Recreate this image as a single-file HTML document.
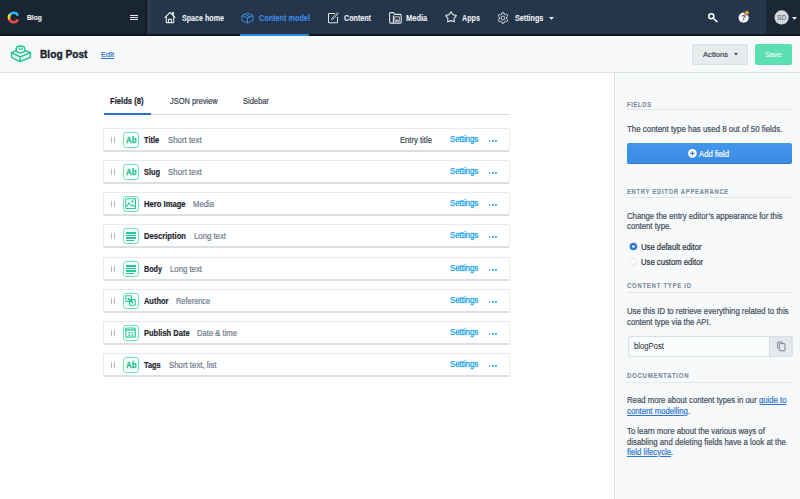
<!DOCTYPE html>
<html><head><meta charset="utf-8"><style>
*{box-sizing:border-box;margin:0;padding:0}
html,body{width:800px;height:499px;overflow:hidden;background:#fff;font-family:"Liberation Sans",sans-serif;color:#2a3039}
.a{position:absolute;white-space:nowrap}
.b{position:absolute}
svg{position:absolute;overflow:visible}
</style></head><body>
<div class="b" style="left:0px;top:0px;width:800px;height:36px;background:#25354a;"></div>
<div class="b" style="left:0px;top:0px;width:145px;height:36px;background:#192533;"></div>
<div class="b" style="left:145px;top:0px;width:2px;height:36px;background:#121b25;"></div>
<div class="b" style="left:147px;top:0px;width:4px;height:36px;background:#2a3a4c;"></div>
<div class="b" style="left:766px;top:0px;width:34px;height:36px;background:#1b2735;"></div>
<div class="b" style="left:0px;top:34px;width:800px;height:2px;background:#0f1720;"></div>
<svg style="left:0;top:0" width="30" height="30" viewBox="0 0 30 30">
<path d="M17.40 14.61 A4.7 4.7 0 0 0 9.85 14.80" stroke="#33b9f2" stroke-width="2.6" fill="none" stroke-linecap="round"/>
<path d="M9.85 14.80 A4.7 4.7 0 0 0 9.63 19.85" stroke="#fde021" stroke-width="2.6" fill="none"/>
<path d="M9.63 19.85 A4.7 4.7 0 0 0 17.40 20.39" stroke="#f2494c" stroke-width="2.6" fill="none" stroke-linecap="round"/>
</svg><div class="a" id="t0" style="left:27.10px;top:14px;font-size:7.5px;line-height:7.5px;font-weight:700;color:#f2f4f6;-webkit-text-stroke:0.1px #f2f4f6;;transform:scaleX(0.8997);transform-origin:0 0;">Blog</div>
<div class="b" style="left:129.5px;top:15px;width:8px;height:1.2px;background:#e6eaee;"></div>
<div class="b" style="left:129.5px;top:17px;width:8px;height:1.2px;background:#e6eaee;"></div>
<div class="b" style="left:129.5px;top:19px;width:8px;height:1.2px;background:#e6eaee;"></div>
<div class="a" id="t1" style="left:181.90px;top:14px;font-size:8.3px;line-height:8.3px;font-weight:700;color:#eef1f4;-webkit-text-stroke:0.1px #eef1f4;;transform:scaleX(0.8591);transform-origin:0 0;">Space home</div>
<div class="a" id="t2" style="left:259.00px;top:14px;font-size:8.3px;line-height:8.3px;font-weight:700;color:#3b8fe2;-webkit-text-stroke:0.1px #3b8fe2;;transform:scaleX(0.8764);transform-origin:0 0;">Content model</div>
<div class="a" id="t3" style="left:344.25px;top:14px;font-size:8.3px;line-height:8.3px;font-weight:700;color:#eef1f4;-webkit-text-stroke:0.1px #eef1f4;;transform:scaleX(0.8614);transform-origin:0 0;">Content</div>
<div class="a" id="t4" style="left:406.20px;top:14px;font-size:8.3px;line-height:8.3px;font-weight:700;color:#eef1f4;-webkit-text-stroke:0.1px #eef1f4;;transform:scaleX(0.9015);transform-origin:0 0;">Media</div>
<div class="a" id="t5" style="left:462.30px;top:14px;font-size:8.3px;line-height:8.3px;font-weight:700;color:#eef1f4;-webkit-text-stroke:0.1px #eef1f4;;transform:scaleX(0.8627);transform-origin:0 0;">Apps</div>
<div class="a" id="t6" style="left:514.60px;top:14px;font-size:8.3px;line-height:8.3px;font-weight:700;color:#eef1f4;-webkit-text-stroke:0.1px #eef1f4;;transform:scaleX(0.8645);transform-origin:0 0;">Settings</div>
<div class="b" style="left:240.4px;top:34px;width:68.6px;height:2px;background:#2f8ae6;"></div>
<svg style="left:164px;top:11px" width="13" height="13" viewBox="0 0 13 13">
<g stroke="#dfe4e9" stroke-width="1.15" fill="none" stroke-linejoin="round" stroke-linecap="round">
<path d="M1 6.4 L6 1.5 L11 6.4"/><path d="M2.3 5.3 V11.6 H9.7 V5.3"/><path d="M4.5 11.6 V8.4 H7.5 V11.6"/><path d="M8.4 2.6 V1.6 H9.5 V4"/></g></svg><svg style="left:241px;top:11.5px" width="13" height="12" viewBox="0 0 13 12">
<path d="M6.5 1 L12 3.5 V8.5 L6.5 11 L1 8.5 V3.5 Z M1 3.5 L6.5 6 L12 3.5 M6.5 6 V11 M3.8 2.3 L9.2 4.8" stroke="#3b8fe2" stroke-width="1" fill="none" stroke-linejoin="round"/></svg><svg style="left:327px;top:11.5px" width="12" height="12" viewBox="0 0 12 12">
<path d="M8 1.5 H1.5 V10.8 H10.5 V4.8" stroke="#dfe4e9" stroke-width="1" fill="none"/>
<path d="M4.6 7.6 L5.1 6 L10.4 0.9 L11.2 1.7 L6.1 7.0 Z" stroke="#dfe4e9" stroke-width="0.8" fill="none"/></svg><svg style="left:388.5px;top:12px" width="13" height="12" viewBox="0 0 13 12">
<g stroke="#dfe4e9" stroke-width="1.1" fill="none" stroke-linejoin="round">
<path d="M1.6 0.6 H4.6 L5.6 2.4 H11.3 Q12.2 2.4 12.2 3.3 V10.2 Q12.2 11.1 11.3 11.1 H1.5 Q0.6 11.1 0.6 10.2 V1.6 Q0.6 0.6 1.6 0.6 Z"/>
<path d="M4.4 3.4 V11"/><rect x="5.8" y="4.8" width="4.6" height="4.6" stroke-width="0.8"/></g>
<path d="M6.4 8.8 L7.6 7 L8.4 8 L9 7.4 L9.9 8.8 Z" fill="#dfe4e9"/></svg><svg style="left:444.5px;top:11.3px" width="12" height="12" viewBox="0 0 12 12">
<path d="M6.00 0.70 L7.94 3.63 L11.33 4.57 L9.14 7.32 L9.29 10.83 L6.00 9.60 L2.71 10.83 L2.86 7.32 L0.67 4.57 L4.06 3.63 Z" stroke="#dfe4e9" stroke-width="1.15" fill="none" stroke-linejoin="round"/></svg><svg style="left:497px;top:11.5px" width="12" height="12" viewBox="0 0 12 12">
<circle cx="6" cy="6" r="1.9" stroke="#dfe4e9" stroke-width="0.9" fill="none"/>
<path d="M5 0.8 H7 L7.3 2.2 L8.4 2.8 L9.8 2.2 L10.8 3.9 L9.7 4.9 V7.1 L10.8 8.1 L9.8 9.8 L8.4 9.2 L7.3 9.8 L7 11.2 H5 L4.7 9.8 L3.6 9.2 L2.2 9.8 L1.2 8.1 L2.3 7.1 V4.9 L1.2 3.9 L2.2 2.2 L3.6 2.8 L4.7 2.2 Z" stroke="#dfe4e9" stroke-width="0.9" fill="none" stroke-linejoin="round"/></svg><svg style="left:549px;top:16.8px" width="5" height="3" viewBox="0 0 5 3"><path d="M0 0 H5 L2.5 2.8 Z" fill="#eef1f4"/></svg><svg style="left:707px;top:12px" width="10" height="10" viewBox="0 0 10 10">
<circle cx="4.3" cy="4.3" r="2.5" stroke="#fff" stroke-width="1.5" fill="none"/><path d="M6.2 6.2 L10 9.6" stroke="#fff" stroke-width="1.5" stroke-linecap="round"/></svg><svg style="left:738px;top:10.5px" width="13" height="13" viewBox="0 0 13 13">
<circle cx="5.6" cy="6.7" r="5.1" fill="#f4f6f8"/>
<text x="5.6" y="9.4" font-family="Liberation Sans" font-size="7" font-weight="700" fill="#25354a" text-anchor="middle">?</text>
<circle cx="8.9" cy="1.8" r="2.3" fill="#f7a52b" stroke="#25354a" stroke-width="0.7"/></svg><svg style="left:774px;top:10px" width="16" height="15" viewBox="0 0 16 15">
<circle cx="7.6" cy="7.4" r="7.1" fill="#d5d9dd"/>
<text x="7.6" y="9.9" font-family="Liberation Sans" font-size="6.6" font-weight="400" fill="#59636e" text-anchor="middle">SD</text></svg><svg style="left:792px;top:17px" width="5" height="3" viewBox="0 0 5 3"><path d="M0 0 H5 L2.5 2.8 Z" fill="#fff"/></svg><div class="b" style="left:0px;top:36px;width:800px;height:37px;background:#f7f9fa;border-bottom:1px solid #dde4e8"></div>
<svg style="left:5px;top:40px" width="35" height="28" viewBox="0 0 35 28">
<g stroke="#22c98f" stroke-width="1.5" fill="none" stroke-linejoin="round" stroke-linecap="round">
<path d="M6.6 12.6 L11.3 10.4 M19.7 10.4 L25.4 12.5 L15.2 17 L6.6 12.6 V17.4 L15.2 21.6 L25.4 17.2 V12.5 M15.2 17 V21.6"/>
<path d="M11.3 10.3 V8.6 A4.2 2.5 0 0 1 19.7 8.6 V10.3 A4.2 2.5 0 0 1 11.3 10.3 Z"/>
<ellipse cx="15.5" cy="8.8" rx="1.6" ry="0.9" stroke-width="1"/>
</g></svg><div class="a" id="t7" style="left:40.20px;top:50px;font-size:10.0px;line-height:10.0px;font-weight:700;color:#1b2431;-webkit-text-stroke:0.35px #1b2431;;transform:scaleX(1.0177);transform-origin:0 0;">Blog Post</div>
<div class="a" id="t8" style="left:100.90px;top:51px;font-size:7.6px;line-height:7.6px;font-weight:400;color:#2e75d4;-webkit-text-stroke:0.2px #2e75d4;text-decoration:underline;text-underline-offset:0.5px;transform:scaleX(0.9928);transform-origin:0 0;">Edit</div>
<div class="b" style="left:692px;top:43.5px;width:56px;height:21.5px;background:#e6ebee;border:1px solid #dae1e5;border-radius:2px"></div>
<div class="a" id="t9" style="left:702.90px;top:51px;font-size:7.6px;line-height:7.6px;font-weight:400;color:#3a4553;-webkit-text-stroke:0.2px #3a4553;;transform:scaleX(1.0038);transform-origin:0 0;">Actions</div>
<svg style="left:733.8px;top:53.2px" width="4" height="2.5" viewBox="0 0 4 2.5"><path d="M0 0 H4 L2 2.5 Z" fill="#3a4553"/></svg><div class="b" style="left:755px;top:43.9px;width:36.6px;height:21.2px;background:#5ae0b2;border-radius:2px"></div>
<div class="a" id="t10" style="left:765.00px;top:51px;font-size:7.6px;line-height:7.6px;font-weight:400;color:#eafaf3;-webkit-text-stroke:0.2px #eafaf3;;transform:scaleX(0.9531);transform-origin:0 0;">Save</div>
<div class="a" id="t11" style="left:110.00px;top:97px;font-size:8.3px;line-height:8.3px;font-weight:700;color:#1f2631;-webkit-text-stroke:0.2px #1f2631;;transform:scaleX(0.9198);transform-origin:0 0;">Fields (8)</div>
<div class="a" id="t12" style="left:169.80px;top:97px;font-size:8.3px;line-height:8.3px;font-weight:400;color:#3a4553;-webkit-text-stroke:0.2px #3a4553;;transform:scaleX(0.8957);transform-origin:0 0;">JSON preview</div>
<div class="a" id="t13" style="left:243.10px;top:97px;font-size:8.3px;line-height:8.3px;font-weight:400;color:#3a4553;-webkit-text-stroke:0.2px #3a4553;;transform:scaleX(0.9018);transform-origin:0 0;">Sidebar</div>
<div class="b" style="left:103px;top:114px;width:407px;height:1px;background:#d3dce0;"></div>
<div class="b" style="left:103.8px;top:113px;width:47.2px;height:2px;background:#2873d8;"></div>
<div class="b" style="left:103px;top:128.00px;width:407px;height:24px;background:#fff;border:1px solid #e6ebee;border-bottom:2px solid #d9e0e4;border-radius:2px"></div>
<div class="b" style="left:111.2px;top:136.8px;width:0.9px;height:6.4px;background:#d3dae0;"></div>
<div class="b" style="left:111px;top:136.8px;width:1.3px;height:1.4px;background:#9da9b3;"></div>
<div class="b" style="left:111px;top:139.3px;width:1.3px;height:1.4px;background:#9da9b3;"></div>
<div class="b" style="left:111px;top:141.8px;width:1.3px;height:1.4px;background:#9da9b3;"></div>
<div class="b" style="left:114.2px;top:136.8px;width:0.9px;height:6.4px;background:#d3dae0;"></div>
<div class="b" style="left:114px;top:136.8px;width:1.3px;height:1.4px;background:#9da9b3;"></div>
<div class="b" style="left:114px;top:139.3px;width:1.3px;height:1.4px;background:#9da9b3;"></div>
<div class="b" style="left:114px;top:141.8px;width:1.3px;height:1.4px;background:#9da9b3;"></div>
<div class="b" style="left:122.5px;top:131.60px;width:16px;height:16px;border:1.5px solid #6ee0b9;border-radius:3px"></div>
<div class="a" id="t14" style="left:125.60px;top:136px;font-size:9.0px;line-height:9.0px;font-weight:700;color:#19c48a;-webkit-text-stroke:0.3px #19c48a;;transform:scaleX(0.8667);transform-origin:0 0;">Ab</div>
<div class="a" id="t15" style="left:144.30px;top:136px;font-size:8.3px;line-height:8.3px;font-weight:700;color:#1f2631;-webkit-text-stroke:0.2px #1f2631;;transform:scaleX(0.8991);transform-origin:0 0;">Title</div>
<div class="a" id="t16" style="left:167.80px;top:136px;font-size:8.3px;line-height:8.3px;font-weight:400;color:#6f7c8a;-webkit-text-stroke:0.2px #6f7c8a;;transform:scaleX(0.9461);transform-origin:0 0;">Short text</div>
<div class="a" id="t17" style="left:400.20px;top:136px;font-size:8.3px;line-height:8.3px;font-weight:400;color:#3a4553;-webkit-text-stroke:0.2px #3a4553;;transform:scaleX(0.9221);transform-origin:0 0;">Entry title</div>
<div class="a" id="t18" style="left:449.70px;top:135px;font-size:8.3px;line-height:8.3px;font-weight:400;color:#14a2ea;-webkit-text-stroke:0.28px #14a2ea;;transform:scaleX(0.9405);transform-origin:0 0;">Settings</div>
<div class="b" style="left:488.7px;top:140.1px;width:1.7px;height:1.7px;background:#14a2ea;border-radius:1px"></div>
<div class="b" style="left:491.9px;top:140.1px;width:1.7px;height:1.7px;background:#14a2ea;border-radius:1px"></div>
<div class="b" style="left:495.1px;top:140.1px;width:1.7px;height:1.7px;background:#14a2ea;border-radius:1px"></div>
<div class="b" style="left:103px;top:160.00px;width:407px;height:24px;background:#fff;border:1px solid #e6ebee;border-bottom:2px solid #d9e0e4;border-radius:2px"></div>
<div class="b" style="left:111.2px;top:168.8px;width:0.9px;height:6.4px;background:#d3dae0;"></div>
<div class="b" style="left:111px;top:168.8px;width:1.3px;height:1.4px;background:#9da9b3;"></div>
<div class="b" style="left:111px;top:171.3px;width:1.3px;height:1.4px;background:#9da9b3;"></div>
<div class="b" style="left:111px;top:173.8px;width:1.3px;height:1.4px;background:#9da9b3;"></div>
<div class="b" style="left:114.2px;top:168.8px;width:0.9px;height:6.4px;background:#d3dae0;"></div>
<div class="b" style="left:114px;top:168.8px;width:1.3px;height:1.4px;background:#9da9b3;"></div>
<div class="b" style="left:114px;top:171.3px;width:1.3px;height:1.4px;background:#9da9b3;"></div>
<div class="b" style="left:114px;top:173.8px;width:1.3px;height:1.4px;background:#9da9b3;"></div>
<div class="b" style="left:122.5px;top:163.60px;width:16px;height:16px;border:1.5px solid #6ee0b9;border-radius:3px"></div>
<div class="a" id="t19" style="left:125.60px;top:168px;font-size:9.0px;line-height:9.0px;font-weight:700;color:#19c48a;-webkit-text-stroke:0.3px #19c48a;;transform:scaleX(0.8667);transform-origin:0 0;">Ab</div>
<div class="a" id="t20" style="left:144.30px;top:168px;font-size:8.3px;line-height:8.3px;font-weight:700;color:#1f2631;-webkit-text-stroke:0.2px #1f2631;;transform:scaleX(0.8897);transform-origin:0 0;">Slug</div>
<div class="a" id="t21" style="left:167.60px;top:168px;font-size:8.3px;line-height:8.3px;font-weight:400;color:#6f7c8a;-webkit-text-stroke:0.2px #6f7c8a;;transform:scaleX(0.9517);transform-origin:0 0;">Short text</div>
<div class="a" id="t22" style="left:449.70px;top:167px;font-size:8.3px;line-height:8.3px;font-weight:400;color:#14a2ea;-webkit-text-stroke:0.28px #14a2ea;;transform:scaleX(0.9405);transform-origin:0 0;">Settings</div>
<div class="b" style="left:488.7px;top:172.1px;width:1.7px;height:1.7px;background:#14a2ea;border-radius:1px"></div>
<div class="b" style="left:491.9px;top:172.1px;width:1.7px;height:1.7px;background:#14a2ea;border-radius:1px"></div>
<div class="b" style="left:495.1px;top:172.1px;width:1.7px;height:1.7px;background:#14a2ea;border-radius:1px"></div>
<div class="b" style="left:103px;top:192.00px;width:407px;height:24px;background:#fff;border:1px solid #e6ebee;border-bottom:2px solid #d9e0e4;border-radius:2px"></div>
<div class="b" style="left:111.2px;top:200.8px;width:0.9px;height:6.4px;background:#d3dae0;"></div>
<div class="b" style="left:111px;top:200.8px;width:1.3px;height:1.4px;background:#9da9b3;"></div>
<div class="b" style="left:111px;top:203.3px;width:1.3px;height:1.4px;background:#9da9b3;"></div>
<div class="b" style="left:111px;top:205.8px;width:1.3px;height:1.4px;background:#9da9b3;"></div>
<div class="b" style="left:114.2px;top:200.8px;width:0.9px;height:6.4px;background:#d3dae0;"></div>
<div class="b" style="left:114px;top:200.8px;width:1.3px;height:1.4px;background:#9da9b3;"></div>
<div class="b" style="left:114px;top:203.3px;width:1.3px;height:1.4px;background:#9da9b3;"></div>
<div class="b" style="left:114px;top:205.8px;width:1.3px;height:1.4px;background:#9da9b3;"></div>
<div class="b" style="left:122.5px;top:195.60px;width:16px;height:16px;border:1.5px solid #6ee0b9;border-radius:3px"></div>
<svg style="left:125px;top:198.30px" width="11" height="11" viewBox="0 0 11 11">
<rect x="0.7" y="0.7" width="9.8" height="9.8" stroke="#1fcd91" stroke-width="1.1" fill="none" rx="0.8"/>
<path d="M1.8 8.6 L4 5 L6.6 8 L7.6 7.2 L9.6 8.8" stroke="#1fcd91" stroke-width="1.1" fill="none"/>
<circle cx="7.3" cy="3.4" r="1.1" fill="#1fcd91"/></svg><div class="a" id="t23" style="left:144.30px;top:200px;font-size:8.3px;line-height:8.3px;font-weight:700;color:#1f2631;-webkit-text-stroke:0.2px #1f2631;;transform:scaleX(0.9206);transform-origin:0 0;">Hero Image</div>
<div class="a" id="t24" style="left:193.00px;top:200px;font-size:8.3px;line-height:8.3px;font-weight:400;color:#6f7c8a;-webkit-text-stroke:0.2px #6f7c8a;;transform:scaleX(0.9288);transform-origin:0 0;">Media</div>
<div class="a" id="t25" style="left:449.70px;top:199px;font-size:8.3px;line-height:8.3px;font-weight:400;color:#14a2ea;-webkit-text-stroke:0.28px #14a2ea;;transform:scaleX(0.9405);transform-origin:0 0;">Settings</div>
<div class="b" style="left:488.7px;top:204.1px;width:1.7px;height:1.7px;background:#14a2ea;border-radius:1px"></div>
<div class="b" style="left:491.9px;top:204.1px;width:1.7px;height:1.7px;background:#14a2ea;border-radius:1px"></div>
<div class="b" style="left:495.1px;top:204.1px;width:1.7px;height:1.7px;background:#14a2ea;border-radius:1px"></div>
<div class="b" style="left:103px;top:224.00px;width:407px;height:24px;background:#fff;border:1px solid #e6ebee;border-bottom:2px solid #d9e0e4;border-radius:2px"></div>
<div class="b" style="left:111.2px;top:232.8px;width:0.9px;height:6.4px;background:#d3dae0;"></div>
<div class="b" style="left:111px;top:232.8px;width:1.3px;height:1.4px;background:#9da9b3;"></div>
<div class="b" style="left:111px;top:235.3px;width:1.3px;height:1.4px;background:#9da9b3;"></div>
<div class="b" style="left:111px;top:237.8px;width:1.3px;height:1.4px;background:#9da9b3;"></div>
<div class="b" style="left:114.2px;top:232.8px;width:0.9px;height:6.4px;background:#d3dae0;"></div>
<div class="b" style="left:114px;top:232.8px;width:1.3px;height:1.4px;background:#9da9b3;"></div>
<div class="b" style="left:114px;top:235.3px;width:1.3px;height:1.4px;background:#9da9b3;"></div>
<div class="b" style="left:114px;top:237.8px;width:1.3px;height:1.4px;background:#9da9b3;"></div>
<div class="b" style="left:122.5px;top:227.60px;width:16px;height:16px;border:1.5px solid #6ee0b9;border-radius:3px"></div>
<div class="b" style="left:125.5px;top:232.0px;width:10.5px;height:1.5px;background:#1fcd91;"></div>
<div class="b" style="left:125.5px;top:234.5px;width:10.5px;height:1.5px;background:#1fcd91;"></div>
<div class="b" style="left:125.5px;top:237.0px;width:10.5px;height:1.5px;background:#1fcd91;"></div>
<div class="b" style="left:125.5px;top:239.5px;width:8.5px;height:1.5px;background:#1fcd91;"></div>
<div class="a" id="t26" style="left:144.30px;top:232px;font-size:8.3px;line-height:8.3px;font-weight:700;color:#1f2631;-webkit-text-stroke:0.2px #1f2631;;transform:scaleX(0.9199);transform-origin:0 0;">Description</div>
<div class="a" id="t27" style="left:193.60px;top:232px;font-size:8.3px;line-height:8.3px;font-weight:400;color:#6f7c8a;-webkit-text-stroke:0.2px #6f7c8a;;transform:scaleX(0.9373);transform-origin:0 0;">Long text</div>
<div class="a" id="t28" style="left:449.70px;top:231px;font-size:8.3px;line-height:8.3px;font-weight:400;color:#14a2ea;-webkit-text-stroke:0.28px #14a2ea;;transform:scaleX(0.9405);transform-origin:0 0;">Settings</div>
<div class="b" style="left:488.7px;top:236.1px;width:1.7px;height:1.7px;background:#14a2ea;border-radius:1px"></div>
<div class="b" style="left:491.9px;top:236.1px;width:1.7px;height:1.7px;background:#14a2ea;border-radius:1px"></div>
<div class="b" style="left:495.1px;top:236.1px;width:1.7px;height:1.7px;background:#14a2ea;border-radius:1px"></div>
<div class="b" style="left:103px;top:257.00px;width:407px;height:24px;background:#fff;border:1px solid #e6ebee;border-bottom:2px solid #d9e0e4;border-radius:2px"></div>
<div class="b" style="left:111.2px;top:265.8px;width:0.9px;height:6.4px;background:#d3dae0;"></div>
<div class="b" style="left:111px;top:265.8px;width:1.3px;height:1.4px;background:#9da9b3;"></div>
<div class="b" style="left:111px;top:268.3px;width:1.3px;height:1.4px;background:#9da9b3;"></div>
<div class="b" style="left:111px;top:270.8px;width:1.3px;height:1.4px;background:#9da9b3;"></div>
<div class="b" style="left:114.2px;top:265.8px;width:0.9px;height:6.4px;background:#d3dae0;"></div>
<div class="b" style="left:114px;top:265.8px;width:1.3px;height:1.4px;background:#9da9b3;"></div>
<div class="b" style="left:114px;top:268.3px;width:1.3px;height:1.4px;background:#9da9b3;"></div>
<div class="b" style="left:114px;top:270.8px;width:1.3px;height:1.4px;background:#9da9b3;"></div>
<div class="b" style="left:122.5px;top:260.60px;width:16px;height:16px;border:1.5px solid #6ee0b9;border-radius:3px"></div>
<div class="b" style="left:125.5px;top:265.0px;width:10.5px;height:1.5px;background:#1fcd91;"></div>
<div class="b" style="left:125.5px;top:267.5px;width:10.5px;height:1.5px;background:#1fcd91;"></div>
<div class="b" style="left:125.5px;top:270.0px;width:10.5px;height:1.5px;background:#1fcd91;"></div>
<div class="b" style="left:125.5px;top:272.5px;width:8.5px;height:1.5px;background:#1fcd91;"></div>
<div class="a" id="t29" style="left:144.30px;top:265px;font-size:8.3px;line-height:8.3px;font-weight:700;color:#1f2631;-webkit-text-stroke:0.2px #1f2631;;transform:scaleX(0.8675);transform-origin:0 0;">Body</div>
<div class="a" id="t30" style="left:169.60px;top:265px;font-size:8.3px;line-height:8.3px;font-weight:400;color:#6f7c8a;-webkit-text-stroke:0.2px #6f7c8a;;transform:scaleX(0.9373);transform-origin:0 0;">Long text</div>
<div class="a" id="t31" style="left:449.70px;top:264px;font-size:8.3px;line-height:8.3px;font-weight:400;color:#14a2ea;-webkit-text-stroke:0.28px #14a2ea;;transform:scaleX(0.9405);transform-origin:0 0;">Settings</div>
<div class="b" style="left:488.7px;top:269.1px;width:1.7px;height:1.7px;background:#14a2ea;border-radius:1px"></div>
<div class="b" style="left:491.9px;top:269.1px;width:1.7px;height:1.7px;background:#14a2ea;border-radius:1px"></div>
<div class="b" style="left:495.1px;top:269.1px;width:1.7px;height:1.7px;background:#14a2ea;border-radius:1px"></div>
<div class="b" style="left:103px;top:289.00px;width:407px;height:24px;background:#fff;border:1px solid #e6ebee;border-bottom:2px solid #d9e0e4;border-radius:2px"></div>
<div class="b" style="left:111.2px;top:297.8px;width:0.9px;height:6.4px;background:#d3dae0;"></div>
<div class="b" style="left:111px;top:297.8px;width:1.3px;height:1.4px;background:#9da9b3;"></div>
<div class="b" style="left:111px;top:300.3px;width:1.3px;height:1.4px;background:#9da9b3;"></div>
<div class="b" style="left:111px;top:302.8px;width:1.3px;height:1.4px;background:#9da9b3;"></div>
<div class="b" style="left:114.2px;top:297.8px;width:0.9px;height:6.4px;background:#d3dae0;"></div>
<div class="b" style="left:114px;top:297.8px;width:1.3px;height:1.4px;background:#9da9b3;"></div>
<div class="b" style="left:114px;top:300.3px;width:1.3px;height:1.4px;background:#9da9b3;"></div>
<div class="b" style="left:114px;top:302.8px;width:1.3px;height:1.4px;background:#9da9b3;"></div>
<div class="b" style="left:122.5px;top:292.60px;width:16px;height:16px;border:1.5px solid #6ee0b9;border-radius:3px"></div>
<svg style="left:125px;top:295.30px" width="11" height="11" viewBox="0 0 11 11">
<rect x="0.8" y="0.8" width="5.6" height="5.6" stroke="#1fcd91" stroke-width="1.1" fill="none" rx="0.5"/>
<rect x="4.6" y="4.6" width="5.6" height="5.6" stroke="#1fcd91" stroke-width="1.1" fill="none" rx="0.5"/>
<path d="M2.8 3.2 L8 8.2" stroke="#1fcd91" stroke-width="1.6"/></svg><div class="a" id="t32" style="left:144.30px;top:297px;font-size:8.3px;line-height:8.3px;font-weight:700;color:#1f2631;-webkit-text-stroke:0.2px #1f2631;;transform:scaleX(0.8970);transform-origin:0 0;">Author</div>
<div class="a" id="t33" style="left:176.40px;top:297px;font-size:8.3px;line-height:8.3px;font-weight:400;color:#6f7c8a;-webkit-text-stroke:0.2px #6f7c8a;;transform:scaleX(0.8934);transform-origin:0 0;">Reference</div>
<div class="a" id="t34" style="left:449.70px;top:296px;font-size:8.3px;line-height:8.3px;font-weight:400;color:#14a2ea;-webkit-text-stroke:0.28px #14a2ea;;transform:scaleX(0.9405);transform-origin:0 0;">Settings</div>
<div class="b" style="left:488.7px;top:301.1px;width:1.7px;height:1.7px;background:#14a2ea;border-radius:1px"></div>
<div class="b" style="left:491.9px;top:301.1px;width:1.7px;height:1.7px;background:#14a2ea;border-radius:1px"></div>
<div class="b" style="left:495.1px;top:301.1px;width:1.7px;height:1.7px;background:#14a2ea;border-radius:1px"></div>
<div class="b" style="left:103px;top:321.00px;width:407px;height:24px;background:#fff;border:1px solid #e6ebee;border-bottom:2px solid #d9e0e4;border-radius:2px"></div>
<div class="b" style="left:111.2px;top:329.8px;width:0.9px;height:6.4px;background:#d3dae0;"></div>
<div class="b" style="left:111px;top:329.8px;width:1.3px;height:1.4px;background:#9da9b3;"></div>
<div class="b" style="left:111px;top:332.3px;width:1.3px;height:1.4px;background:#9da9b3;"></div>
<div class="b" style="left:111px;top:334.8px;width:1.3px;height:1.4px;background:#9da9b3;"></div>
<div class="b" style="left:114.2px;top:329.8px;width:0.9px;height:6.4px;background:#d3dae0;"></div>
<div class="b" style="left:114px;top:329.8px;width:1.3px;height:1.4px;background:#9da9b3;"></div>
<div class="b" style="left:114px;top:332.3px;width:1.3px;height:1.4px;background:#9da9b3;"></div>
<div class="b" style="left:114px;top:334.8px;width:1.3px;height:1.4px;background:#9da9b3;"></div>
<div class="b" style="left:122.5px;top:324.60px;width:16px;height:16px;border:1.5px solid #6ee0b9;border-radius:3px"></div>
<svg style="left:125px;top:327.30px" width="11" height="11" viewBox="0 0 11 11">
<rect x="0.8" y="1" width="9.4" height="9.2" stroke="#1fcd91" stroke-width="1.2" fill="none" rx="1"/>
<path d="M0.8 2.9 H10.2" stroke="#1fcd91" stroke-width="1.3"/>
<text x="5.5" y="8.8" font-family="Liberation Sans" font-size="5.2" font-weight="700" fill="#1fcd91" text-anchor="middle">31</text></svg><div class="a" id="t35" style="left:144.30px;top:329px;font-size:8.3px;line-height:8.3px;font-weight:700;color:#1f2631;-webkit-text-stroke:0.2px #1f2631;;transform:scaleX(0.9072);transform-origin:0 0;">Publish Date</div>
<div class="a" id="t36" style="left:197.40px;top:329px;font-size:8.3px;line-height:8.3px;font-weight:400;color:#6f7c8a;-webkit-text-stroke:0.2px #6f7c8a;;transform:scaleX(0.9225);transform-origin:0 0;">Date &amp; time</div>
<div class="a" id="t37" style="left:449.70px;top:328px;font-size:8.3px;line-height:8.3px;font-weight:400;color:#14a2ea;-webkit-text-stroke:0.28px #14a2ea;;transform:scaleX(0.9405);transform-origin:0 0;">Settings</div>
<div class="b" style="left:488.7px;top:333.1px;width:1.7px;height:1.7px;background:#14a2ea;border-radius:1px"></div>
<div class="b" style="left:491.9px;top:333.1px;width:1.7px;height:1.7px;background:#14a2ea;border-radius:1px"></div>
<div class="b" style="left:495.1px;top:333.1px;width:1.7px;height:1.7px;background:#14a2ea;border-radius:1px"></div>
<div class="b" style="left:103px;top:353.00px;width:407px;height:24px;background:#fff;border:1px solid #e6ebee;border-bottom:2px solid #d9e0e4;border-radius:2px"></div>
<div class="b" style="left:111.2px;top:361.8px;width:0.9px;height:6.4px;background:#d3dae0;"></div>
<div class="b" style="left:111px;top:361.8px;width:1.3px;height:1.4px;background:#9da9b3;"></div>
<div class="b" style="left:111px;top:364.3px;width:1.3px;height:1.4px;background:#9da9b3;"></div>
<div class="b" style="left:111px;top:366.8px;width:1.3px;height:1.4px;background:#9da9b3;"></div>
<div class="b" style="left:114.2px;top:361.8px;width:0.9px;height:6.4px;background:#d3dae0;"></div>
<div class="b" style="left:114px;top:361.8px;width:1.3px;height:1.4px;background:#9da9b3;"></div>
<div class="b" style="left:114px;top:364.3px;width:1.3px;height:1.4px;background:#9da9b3;"></div>
<div class="b" style="left:114px;top:366.8px;width:1.3px;height:1.4px;background:#9da9b3;"></div>
<div class="b" style="left:122.5px;top:356.60px;width:16px;height:16px;border:1.5px solid #6ee0b9;border-radius:3px"></div>
<div class="a" id="t38" style="left:125.60px;top:361px;font-size:9.0px;line-height:9.0px;font-weight:700;color:#19c48a;-webkit-text-stroke:0.3px #19c48a;;transform:scaleX(0.8667);transform-origin:0 0;">Ab</div>
<div class="a" id="t39" style="left:144.30px;top:361px;font-size:8.3px;line-height:8.3px;font-weight:700;color:#1f2631;-webkit-text-stroke:0.2px #1f2631;;transform:scaleX(0.8853);transform-origin:0 0;">Tags</div>
<div class="a" id="t40" style="left:168.60px;top:361px;font-size:8.3px;line-height:8.3px;font-weight:400;color:#6f7c8a;-webkit-text-stroke:0.2px #6f7c8a;;transform:scaleX(0.9430);transform-origin:0 0;">Short text, list</div>
<div class="a" id="t41" style="left:449.70px;top:360px;font-size:8.3px;line-height:8.3px;font-weight:400;color:#14a2ea;-webkit-text-stroke:0.28px #14a2ea;;transform:scaleX(0.9405);transform-origin:0 0;">Settings</div>
<div class="b" style="left:488.7px;top:365.1px;width:1.7px;height:1.7px;background:#14a2ea;border-radius:1px"></div>
<div class="b" style="left:491.9px;top:365.1px;width:1.7px;height:1.7px;background:#14a2ea;border-radius:1px"></div>
<div class="b" style="left:495.1px;top:365.1px;width:1.7px;height:1.7px;background:#14a2ea;border-radius:1px"></div>
<div class="b" style="left:614px;top:73px;width:186px;height:426px;background:#f7f9fa;border-left:1px solid #d7dfe3"></div>
<div class="a" id="t42" style="left:627.20px;top:102px;font-size:6.5px;line-height:6.5px;font-weight:700;color:#7a8b9d;-webkit-text-stroke:0.1px #7a8b9d;letter-spacing:0.8px;transform:scaleX(0.8882);transform-origin:0 0;">FIELDS</div>
<div class="b" style="left:627px;top:109px;width:165px;height:1px;background:#e1e7ea;"></div>
<div class="a" id="t43" style="left:627.00px;top:125px;font-size:8.3px;line-height:8.3px;font-weight:400;color:#454f5c;-webkit-text-stroke:0.2px #454f5c;;transform:scaleX(0.9517);transform-origin:0 0;">The content type has used 8 out of 50 fields.</div>
<div class="b" style="left:627px;top:143px;width:165px;height:21px;background:linear-gradient(#4496ec,#3a8be4);border-radius:2px;border-bottom:1px solid #2f7bd8"></div>
<svg style="left:687.5px;top:149.3px" width="9" height="9" viewBox="0 0 9 9"><circle cx="4.4" cy="4.4" r="4.3" fill="#fff"/><path d="M4.4 2.2 V6.6 M2.2 4.4 H6.6" stroke="#3888e3" stroke-width="1.3"/></svg><div class="a" id="t44" style="left:699.00px;top:150px;font-size:8.3px;line-height:8.3px;font-weight:400;color:#ffffff;-webkit-text-stroke:0.2px #ffffff;;transform:scaleX(0.9289);transform-origin:0 0;">Add field</div>
<div class="a" id="t45" style="left:627.20px;top:189px;font-size:6.5px;line-height:6.5px;font-weight:700;color:#7a8b9d;-webkit-text-stroke:0.1px #7a8b9d;letter-spacing:0.8px;transform:scaleX(0.8995);transform-origin:0 0;">ENTRY EDITOR APPEARANCE</div>
<div class="b" style="left:627px;top:197px;width:165px;height:1px;background:#e1e7ea;"></div>
<div class="a" id="t46" style="left:627.00px;top:212px;font-size:8.3px;line-height:8.3px;font-weight:400;color:#454f5c;-webkit-text-stroke:0.2px #454f5c;;transform:scaleX(0.9356);transform-origin:0 0;">Change the entry editor’s appearance for this</div>
<div class="a" id="t47" style="left:627.00px;top:222px;font-size:8.3px;line-height:8.3px;font-weight:400;color:#454f5c;-webkit-text-stroke:0.2px #454f5c;;transform:scaleX(0.9370);transform-origin:0 0;">content type.</div>
<svg style="left:629px;top:242px" width="10" height="10" viewBox="0 0 10 10"><circle cx="4.4" cy="4.5" r="3.8" fill="#2e79e0"/><circle cx="4.4" cy="4.5" r="1.3" fill="#fff"/></svg><div class="a" id="t48" style="left:641.10px;top:243px;font-size:8.3px;line-height:8.3px;font-weight:400;color:#2a3340;-webkit-text-stroke:0.2px #2a3340;;transform:scaleX(0.9303);transform-origin:0 0;">Use default editor</div>
<svg style="left:629px;top:257px" width="10" height="10" viewBox="0 0 10 10"><circle cx="4.4" cy="4.6" r="3.5" fill="#fdfdfe" stroke="#dfe5e9" stroke-width="0.9"/></svg><div class="a" id="t49" style="left:641.10px;top:258px;font-size:8.3px;line-height:8.3px;font-weight:400;color:#2a3340;-webkit-text-stroke:0.2px #2a3340;;transform:scaleX(0.9271);transform-origin:0 0;">Use custom editor</div>
<div class="a" id="t50" style="left:627.20px;top:283px;font-size:6.5px;line-height:6.5px;font-weight:700;color:#7a8b9d;-webkit-text-stroke:0.1px #7a8b9d;letter-spacing:0.8px;transform:scaleX(0.9189);transform-origin:0 0;">CONTENT TYPE ID</div>
<div class="b" style="left:627px;top:292px;width:165px;height:1px;background:#e1e7ea;"></div>
<div class="a" id="t51" style="left:627.00px;top:307px;font-size:8.3px;line-height:8.3px;font-weight:400;color:#454f5c;-webkit-text-stroke:0.2px #454f5c;;transform:scaleX(0.9364);transform-origin:0 0;">Use this ID to retrieve everything related to this</div>
<div class="a" id="t52" style="left:627.00px;top:318px;font-size:8.3px;line-height:8.3px;font-weight:400;color:#454f5c;-webkit-text-stroke:0.2px #454f5c;;transform:scaleX(0.9370);transform-origin:0 0;">content type via the API.</div>
<div class="b" style="left:627.5px;top:335.6px;width:165px;height:21px;background:#fafbfc;border:1px solid #dbe2e6;border-radius:2px"></div>
<div class="b" style="left:769.3px;top:335.6px;width:23.2px;height:21px;background:#e3e9ec;border:1px solid #dbe2e6;border-left:1px solid #d3dce0;border-radius:0 2px 2px 0"></div>
<svg style="left:776.5px;top:341px" width="9" height="11" viewBox="0 0 9 11"><path d="M0.7 7.8 V1 H5.5" stroke="#6e7c8a" stroke-width="0.9" fill="none"/><rect x="2.4" y="2.6" width="5.6" height="7.2" stroke="#6e7c8a" stroke-width="0.9" fill="none" rx="0.5"/></svg><div class="a" id="t53" style="left:633.50px;top:342px;font-size:8.3px;line-height:8.3px;font-weight:400;color:#2a3340;-webkit-text-stroke:0.05px #2a3340;;transform:scaleX(0.9289);transform-origin:0 0;">blogPost</div>
<div class="a" id="t54" style="left:627.20px;top:373px;font-size:6.5px;line-height:6.5px;font-weight:700;color:#7a8b9d;-webkit-text-stroke:0.1px #7a8b9d;letter-spacing:0.8px;transform:scaleX(0.9268);transform-origin:0 0;">DOCUMENTATION</div>
<div class="b" style="left:627px;top:382px;width:165px;height:1px;background:#e1e7ea;"></div>
<div class="a" id="t55" style="left:627.00px;top:396px;font-size:8.3px;line-height:8.3px;font-weight:400;color:#454f5c;-webkit-text-stroke:0.2px #454f5c;;transform:scaleX(0.9345);transform-origin:0 0;">Read more about content types in our <span style="color:#2e75d4;-webkit-text-stroke:0.2px #2e75d4;text-decoration:underline;text-underline-offset:1px">guide to</span></div>
<div class="a" id="t56" style="left:627.00px;top:407px;font-size:8.3px;line-height:8.3px;font-weight:400;color:#454f5c;-webkit-text-stroke:0.2px #454f5c;;transform:scaleX(0.9370);transform-origin:0 0;"><span style="color:#2e75d4;-webkit-text-stroke:0.2px #2e75d4;text-decoration:underline;text-underline-offset:1px">content modelling</span>.</div>
<div class="a" id="t57" style="left:627.00px;top:427px;font-size:8.3px;line-height:8.3px;font-weight:400;color:#454f5c;-webkit-text-stroke:0.2px #454f5c;;transform:scaleX(0.9370);transform-origin:0 0;">To learn more about the various ways of</div>
<div class="a" id="t58" style="left:627.00px;top:438px;font-size:8.3px;line-height:8.3px;font-weight:400;color:#454f5c;-webkit-text-stroke:0.2px #454f5c;;transform:scaleX(0.9355);transform-origin:0 0;">disabling and deleting fields have a look at the</div>
<div class="a" id="t59" style="left:627.00px;top:448px;font-size:8.3px;line-height:8.3px;font-weight:400;color:#454f5c;-webkit-text-stroke:0.2px #454f5c;;transform:scaleX(0.9370);transform-origin:0 0;"><span style="color:#2e75d4;-webkit-text-stroke:0.2px #2e75d4;text-decoration:underline;text-underline-offset:1px">field lifecycle</span>.</div>
</body></html>
